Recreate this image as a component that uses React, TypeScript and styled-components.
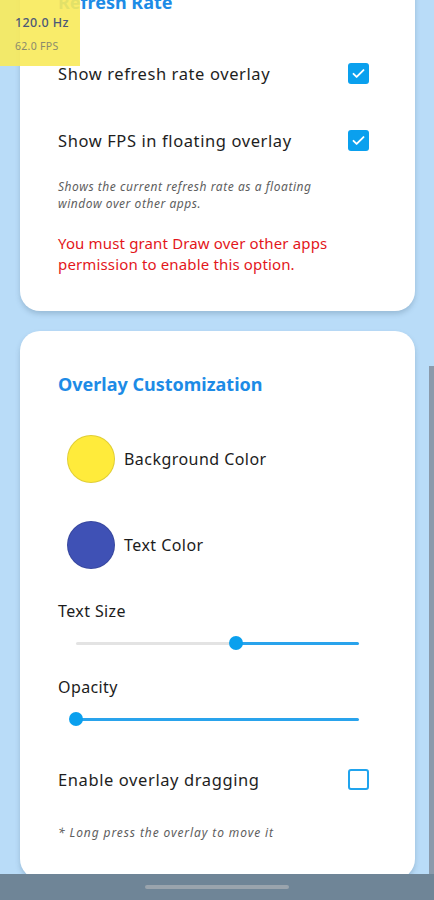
import React from 'react'
import styled, { createGlobalStyle } from 'styled-components'

const GlobalStyle = createGlobalStyle`
  html, body {
    margin: 0;
    padding: 0;
    background: #b9dcf8;
  }
  body {
    font-family: 'Noto Sans', 'DejaVu Sans', sans-serif;
    color: #1c1c1c;
  }
`

const Screen = styled.div`
  position: relative;
  width: 434px;
  height: 900px;
  overflow: hidden;
  background: #b9dcf8;
`

const Scroller = styled.div`
  display: flex;
  flex-direction: column;
  gap: 20px;
  padding: 0 19px 0 20px;
  margin-top: -40px;
`

const Card = styled.section<{ $top: number; $bottom: number }>`
  background: #ffffff;
  border-radius: 20px;
  padding: ${(p) => p.$top}px 38px ${(p) => p.$bottom}px;
  box-shadow: 0 3px 5px rgba(60, 90, 120, 0.25);
  display: flex;
  flex-direction: column;
`

const Title = styled.h2<{ $gap: number }>`
  margin: 0 0 ${(p) => p.$gap}px;
  font-size: 18px;
  line-height: 24px;
  font-weight: 700;
  color: #1d8be6;
`

const CheckRow = styled.label<{ $gap?: number }>`
  display: flex;
  align-items: center;
  justify-content: space-between;
  height: 48px;
  margin-bottom: ${(p) => p.$gap ?? 0}px;
  font-size: 16.5px;
  letter-spacing: 0.6px;
  color: #1e1e1e;
`

const Box = styled.span<{ $on: boolean }>`
  width: 21px;
  height: 21px;
  box-sizing: border-box;
  margin-right: 8px;
  border-radius: 3px;
  display: flex;
  align-items: center;
  justify-content: center;
  background: ${(p) => (p.$on ? '#0aa0ee' : '#ffffff')};
  border: ${(p) => (p.$on ? 'none' : '2px solid #20a4ee')};
`

const Hint = styled.p<{ $gap: number }>`
  margin: 0 0 ${(p) => p.$gap}px;
  font-size: 12px;
  line-height: 17px;
  letter-spacing: 0.55px;
  font-style: italic;
  color: #5e5e5e;
`

const Warning = styled.p`
  margin: 0;
  font-size: 15px;
  line-height: 21px;
  letter-spacing: 0.15px;
  color: #e3161b;
`

const ColorRow = styled.div<{ $gap: number }>`
  display: flex;
  align-items: center;
  gap: 9px;
  height: 48px;
  padding-left: 9px;
  margin-bottom: ${(p) => p.$gap}px;
  font-size: 16px;
  letter-spacing: 0.45px;
`

const Swatch = styled.span<{ $color: string }>`
  width: 48px;
  height: 48px;
  border-radius: 50%;
  box-sizing: border-box;
  background: ${(p) => p.$color};
  border: 1px solid rgba(0, 0, 0, 0.12);
`

const Label = styled.div`
  font-size: 16px;
  line-height: 20px;
  letter-spacing: 0.4px;
`

const Slider = styled.div<{ $gap: number }>`
  position: relative;
  height: 20px;
  margin: 12px 18px ${(p) => p.$gap}px;
  display: flex;
  align-items: center;
`

const Track = styled.div`
  flex: 1;
  height: 3px;
  border-radius: 2px;
`

const Thumb = styled.span`
  position: absolute;
  top: 50%;
  width: 14px;
  height: 14px;
  margin: -7px 0 0 -7px;
  border-radius: 50%;
  background: #0aa0ee;
`

const Note = styled.p`
  margin: 22px 0 0;
  font-size: 12px;
  line-height: 16px;
  letter-spacing: 0.9px;
  font-style: italic;
  color: #5e5e5e;
`

const FloatingOverlay = styled.div`
  position: absolute;
  left: 0;
  top: 0;
  width: 80px;
  height: 66px;
  background: rgba(248, 234, 90, 0.9);
  padding: 15px 0 0 15px;
  box-sizing: border-box;
`

const Hz = styled.div`
  font-size: 12.5px;
  line-height: 16px;
  letter-spacing: 0.4px;
  font-weight: 500;
  color: #4c5878;
`

const Fps = styled.div`
  margin-top: 9px;
  font-size: 10.5px;
  line-height: 12px;
  letter-spacing: 0.3px;
  color: #8a8a6c;
`

const ScrollThumb = styled.div`
  position: absolute;
  right: 0;
  top: 366px;
  bottom: 26px;
  width: 5px;
  background: #8a9aab;
`

const NavBar = styled.div`
  position: absolute;
  left: 0;
  right: 0;
  bottom: 0;
  height: 26px;
  background: #6f8597;
  display: flex;
  justify-content: center;
  padding-top: 11px;
  box-sizing: border-box;
`

const Handle = styled.span`
  width: 144px;
  height: 4px;
  border-radius: 2px;
  background: #9aa4ad;
`

const Check = () => (
  <svg width="15" height="15" viewBox="0 0 24 24" fill="none">
    <path d="M4 12.5l5 5L20 6.5" stroke="#fff" strokeWidth="3" strokeLinecap="round" strokeLinejoin="round" />
  </svg>
)

const CheckBox = ({ on }: { on: boolean }) => <Box $on={on}>{on && <Check />}</Box>

const Range = ({ value, gap }: { value: number; gap: number }) => (
  <Slider $gap={gap}>
    <Track
      style={{
        background: `linear-gradient(to right, #e3e3e3 0 ${value}%, #29a3ec ${value}% 100%)`
      }}
    />
    <Thumb style={{ left: `${value}%` }} />
  </Slider>
)

export default function App() {
  return (
    <Screen>
      <GlobalStyle />
      <Scroller>
        <Card $top={30} $bottom={36}>
          <Title $gap={35}>Refresh Rate</Title>
          <CheckRow $gap={19}>
            Show refresh rate overlay
            <CheckBox on />
          </CheckRow>
          <CheckRow $gap={14}>
            Show FPS in floating overlay
            <CheckBox on />
          </CheckRow>
          <Hint $gap={21}>
            Shows the current refresh rate as a floating
            <br />
            window over other apps.
          </Hint>
          <Warning>
            You must grant Draw over other apps
            <br />
            permission to enable this option.
          </Warning>
        </Card>
        <Card $top={41} $bottom={38}>
          <Title $gap={39}>Overlay Customization</Title>
          <ColorRow $gap={38}>
            <Swatch $color="#ffeb3b" />
            Background Color
          </ColorRow>
          <ColorRow $gap={32}>
            <Swatch $color="#3f51b5" />
            Text Color
          </ColorRow>
          <Label>Text Size</Label>
          <Range value={56.5} gap={24} />
          <Label>Opacity</Label>
          <Range value={0} gap={26} />
          <CheckRow>
            Enable overlay dragging
            <CheckBox on={false} />
          </CheckRow>
          <Note>* Long press the overlay to move it</Note>
        </Card>
      </Scroller>
      <FloatingOverlay>
        <Hz>120.0 Hz</Hz>
        <Fps>62.0 FPS</Fps>
      </FloatingOverlay>
      <ScrollThumb />
      <NavBar>
        <Handle />
      </NavBar>
    </Screen>
  )
}
